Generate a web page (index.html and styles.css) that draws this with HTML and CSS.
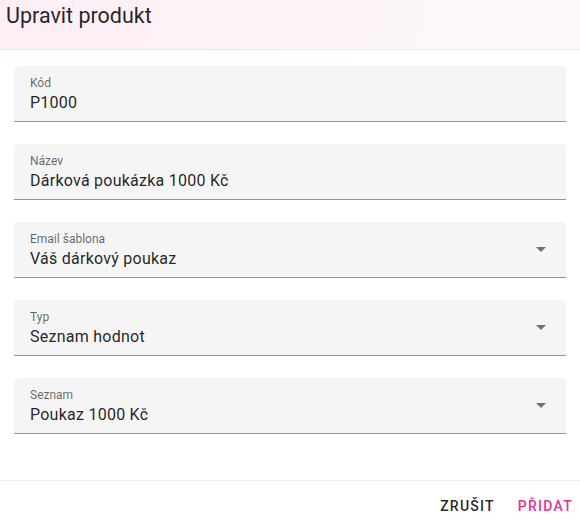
FILE: index.html
```html
<!DOCTYPE html>
<html lang="cs">
<head>
<meta charset="utf-8">
<title>Upravit produkt</title>
<link rel="stylesheet" href="styles.css">
</head>
<body>
<div class="dialog">
  <header class="dialog-header">
    <h2 class="dialog-title">Upravit produkt</h2>
  </header>
  <div class="dialog-content">
    <div class="field">
      <div class="field-body">
        <span class="field-label">Kód</span>
        <span class="field-value">P1000</span>
      </div>
    </div>
    <div class="field">
      <div class="field-body">
        <span class="field-label">Název</span>
        <span class="field-value">Dárková poukázka 1000 Kč</span>
      </div>
    </div>
    <div class="field">
      <div class="field-body">
        <span class="field-label">Email šablona</span>
        <span class="field-value">Váš dárkový poukaz</span>
      </div>
      <svg class="arrow" width="10" height="5" viewBox="0 0 10 5"><path d="M0 0h10L5 5z"/></svg>
    </div>
    <div class="field">
      <div class="field-body">
        <span class="field-label">Typ</span>
        <span class="field-value">Seznam hodnot</span>
      </div>
      <svg class="arrow" width="10" height="5" viewBox="0 0 10 5"><path d="M0 0h10L5 5z"/></svg>
    </div>
    <div class="field">
      <div class="field-body">
        <span class="field-label">Seznam</span>
        <span class="field-value">Poukaz 1000 Kč</span>
      </div>
      <svg class="arrow" width="10" height="5" viewBox="0 0 10 5"><path d="M0 0h10L5 5z"/></svg>
    </div>
  </div>
  <footer class="dialog-actions">
    <button class="btn btn-cancel">Zrušit</button>
    <button class="btn btn-primary">Přidat</button>
  </footer>
</div>
</body>
</html>
```
FILE: styles.css
```css
html, body {
  margin: 0;
  padding: 0;
  background: #ffffff;
}
body {
  font-family: Roboto, "Noto Sans", sans-serif;
  color: rgba(0, 0, 0, 0.87);
}
.dialog {
  width: 580px;
  display: flex;
  flex-direction: column;
}
.dialog-header {
  height: 49px;
  border-bottom: 1px solid #ebebeb;
  background: linear-gradient(100deg, #fdeef6 0%, #fdf5f9 50%, #fdf8f9 100%);
  padding: 0 6px;
}
.dialog-title {
  margin: 0;
  font-size: 21.5px;
  font-weight: 400;
  line-height: 32px;
  color: rgba(0, 0, 0, 0.87);
}
.dialog-content {
  padding: 16px 14px 46px 14px;
  display: flex;
  flex-direction: column;
  gap: 22px;
}
.field {
  display: flex;
  background: #f5f5f5;
  border-radius: 4px 4px 0 0;
  border-bottom: 1px solid #949494;
  height: 55px;
}
.field-body {
  flex: 1;
  display: flex;
  flex-direction: column;
  padding: 10px 16px 0 16px;
}
.field-label {
  font-size: 12px;
  line-height: 15px;
  color: rgba(0, 0, 0, 0.6);
}
.field-value {
  font-size: 16px;
  line-height: 24px;
  letter-spacing: 0.25px;
  color: rgba(0, 0, 0, 0.87);
}
.arrow {
  align-self: center;
  margin-right: 20px;
  fill: rgba(0, 0, 0, 0.54);
}
.dialog-actions {
  border-top: 1px solid #ebebeb;
  display: flex;
  justify-content: flex-end;
  align-items: center;
  gap: 8px;
  padding: 7px 0 0 0;
}
.btn {
  background: none;
  border: none;
  font-family: Roboto, "Noto Sans", sans-serif;
  font-size: 14px;
  font-weight: 500;
  letter-spacing: 1.25px;
  text-transform: uppercase;
  height: 36px;
  padding: 0 7px 0 8px;
  cursor: pointer;
}
.btn-cancel {
  color: rgba(0, 0, 0, 0.87);
}
.btn-primary {
  color: #e3329b;
}
```
